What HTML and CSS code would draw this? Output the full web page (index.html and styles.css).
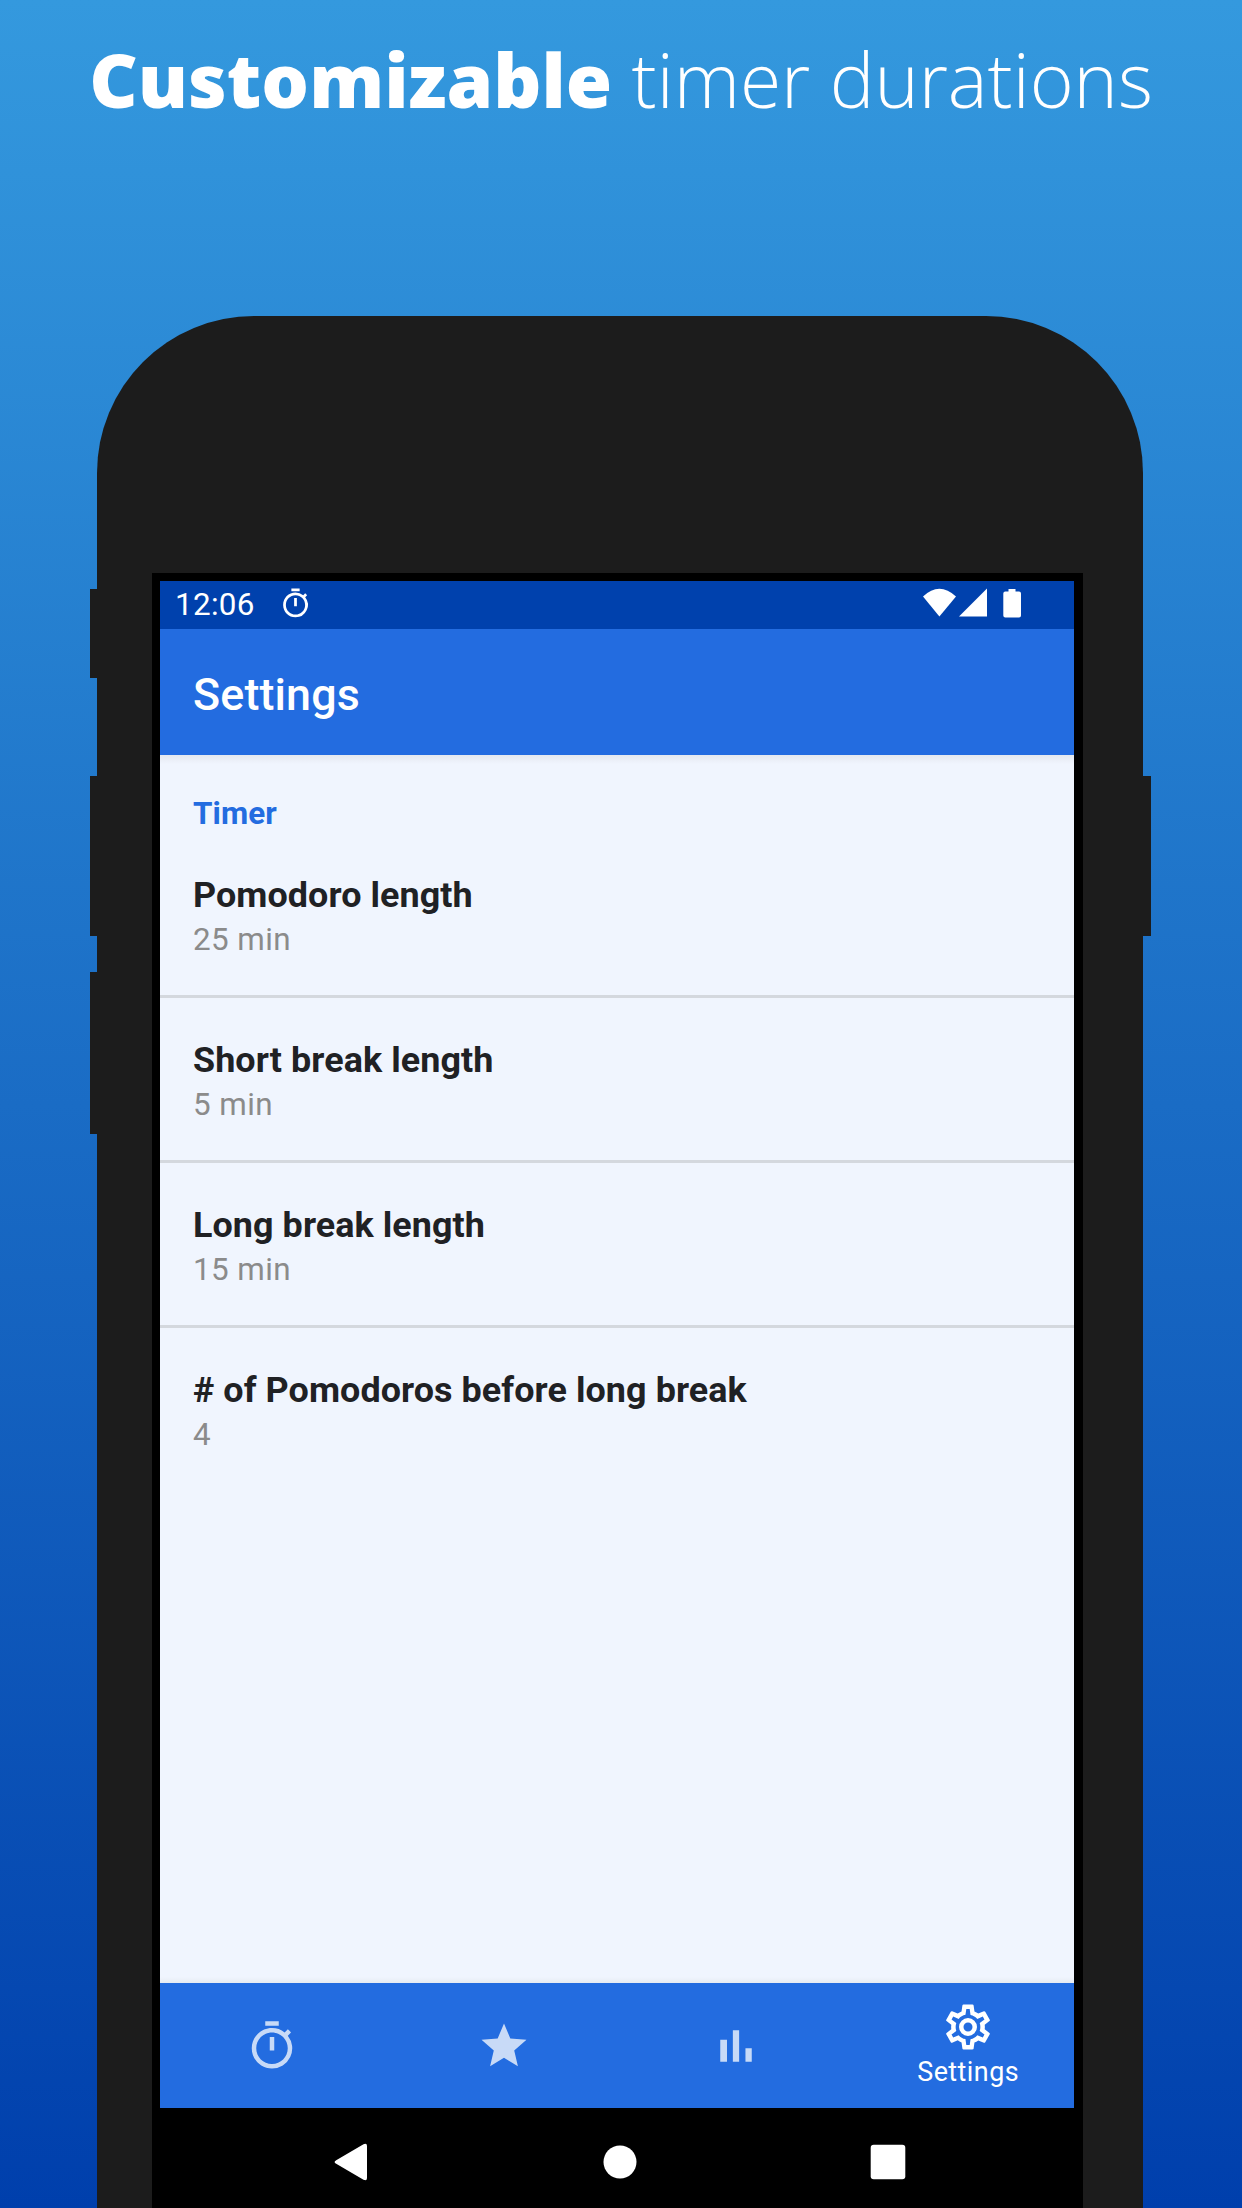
FILE: index.html
```html
<!DOCTYPE html>
<html lang="en">
<head>
<meta charset="utf-8">
<title>Customizable timer durations</title>
<link rel="stylesheet" href="styles.css">
</head>
<body>
<h1 class="headline"><strong>Customizable</strong> timer durations</h1>
<main class="phone">
  <span class="key key-mute"></span>
  <span class="key key-up"></span>
  <span class="key key-down"></span>
  <span class="key key-power"></span>
  <div class="bezel">
    <div class="status">
      <span class="clock">12:06</span>
      <svg class="status-timer" viewBox="0 0 24 24"><path d="M15 1H9v2h6V1zm-4 13h2V8h-2v6zm8.030-6.610l1.420-1.420c-.430-.510-.900-.990-1.410-1.410l-1.420 1.420A8.962 8.962 0 0 0 12 4c-4.970 0-9 4.030-9 9s4.020 9 9 9a8.994 8.994 0 0 0 7.030-14.610zM12 20c-3.870 0-7-3.130-7-7s3.130-7 7-7 7 3.130 7 7-3.130 7-7 7z"/></svg>
      <svg class="status-icons" viewBox="0 0 100 30"><path d="M1 8.500Q17.300-7 34 8.500L17.400 28.500z"/><path d="M37 28.500L65 .500v28z"/><path d="M86.500 1h7v2.500h3.500q2 0 2 2v22q0 2-2 2H83.300q-2 0-2-2v-22q0-2 2-2h3.200z"/></svg>
    </div>
    <header class="app-bar">Settings</header>
    <section class="content">
      <h2 class="section">Timer</h2>
      <div class="row"><div class="name">Pomodoro length</div><div class="value">25 min</div></div>
      <div class="row"><div class="name">Short break length</div><div class="value">5 min</div></div>
      <div class="row"><div class="name">Long break length</div><div class="value">15 min</div></div>
      <div class="row"><div class="name"># of Pomodoros before long break</div><div class="value">4</div></div>
    </section>
    <nav class="tabs">
      <a class="tab"><svg class="icon" viewBox="0 0 24 24"><path d="M15 1H9v2h6V1zm-4 13h2V8h-2v6zm8.030-6.610l1.420-1.420c-.430-.510-.900-.990-1.410-1.410l-1.420 1.420A8.962 8.962 0 0 0 12 4c-4.970 0-9 4.030-9 9s4.020 9 9 9a8.994 8.994 0 0 0 7.030-14.610zM12 20c-3.870 0-7-3.130-7-7s3.130-7 7-7 7 3.130 7 7-3.130 7-7 7z"/></svg></a>
      <a class="tab"><svg class="icon" viewBox="0 0 24 24"><path d="M12 17.270L18.180 21l-1.640-7.030L22 9.240l-7.190-.610L12 2 9.190 8.630 2 9.240l5.460 4.730L5.820 21z"/></svg></a>
      <a class="tab"><svg class="icon" viewBox="0 0 24 24"><path d="M5 9.200h3V19H5zM10.600 5h2.800v14h-2.800zm5.600 8H19v6h-2.800z"/></svg></a>
      <a class="tab active"><svg class="icon" viewBox="0 0 24 24"><path d="M12,8A4,4 0 0,1 16,12A4,4 0 0,1 12,16A4,4 0 0,1 8,12A4,4 0 0,1 12,8M12,10A2,2 0 0,0 10,12A2,2 0 0,0 12,14A2,2 0 0,0 14,12A2,2 0 0,0 12,10M10,22C9.750,22 9.540,21.820 9.500,21.580L9.130,18.930C8.500,18.680 7.960,18.340 7.440,17.940L4.950,18.950C4.730,19.030 4.460,18.950 4.340,18.730L2.340,15.270C2.210,15.050 2.270,14.780 2.460,14.630L4.570,12.970L4.500,12L4.570,11L2.460,9.370C2.270,9.220 2.210,8.950 2.340,8.730L4.340,5.270C4.460,5.050 4.730,4.960 4.950,5.050L7.440,6.050C7.960,5.660 8.500,5.320 9.130,5.070L9.500,2.420C9.540,2.180 9.750,2 10,2H14C14.250,2 14.460,2.180 14.500,2.420L14.870,5.070C15.500,5.320 16.040,5.660 16.560,6.050L19.050,5.050C19.270,4.960 19.540,5.050 19.660,5.270L21.660,8.730C21.790,8.950 21.730,9.220 21.540,9.370L19.430,11L19.500,12L19.430,13L21.540,14.630C21.730,14.780 21.790,15.050 21.660,15.270L19.660,18.730C19.540,18.950 19.270,19.040 19.050,18.950L16.560,17.950C16.040,18.340 15.500,18.680 14.870,18.930L14.500,21.580C14.460,21.820 14.250,22 14,22H10M11.250,4L10.880,6.610C9.680,6.860 8.620,7.500 7.850,8.390L5.440,7.350L4.690,8.650L6.800,10.200C6.400,11.370 6.400,12.640 6.800,13.800L4.680,15.360L5.430,16.660L7.860,15.620C8.630,16.500 9.680,17.140 10.870,17.380L11.240,20H12.760L13.130,17.390C14.320,17.140 15.370,16.500 16.140,15.620L18.570,16.660L19.320,15.360L17.200,13.810C17.600,12.640 17.600,11.370 17.200,10.200L19.310,8.650L18.560,7.350L16.150,8.390C15.380,7.500 14.320,6.860 13.120,6.620L12.750,4H11.250Z"/></svg><span class="tab-label">Settings</span></a>
    </nav>
    <div class="system">
      <svg class="sys-icon" viewBox="0 0 40 40"><path d="M5.200 18.200L32.500 2.300Q36 .800 36 4v32q0 3.200-3.500 1.700L5.200 21.800Q2 20 5.200 18.200z"/></svg>
      <svg class="sys-icon" viewBox="0 0 40 40"><circle cx="20" cy="20" r="16.500"/></svg>
      <svg class="sys-icon" viewBox="0 0 40 40"><rect x="2.700" y="2.700" width="34.600" height="34.600" rx="3"/></svg>
    </div>
  </div>
</main>
</body>
</html>
```
FILE: styles.css
```css
* { box-sizing: border-box; }

body {
  margin: 0;
  width: 1242px;
  height: 2208px;
  display: flex;
  flex-direction: column;
  overflow: hidden;
  background: linear-gradient(#3499de, #003fac);
  font-family: Roboto, sans-serif;
}

svg { display: block; fill: #fff; }

.headline {
  margin: 0;
  height: 316px;
  padding-top: 28px;
  line-height: 102px;
  text-align: center;
  white-space: nowrap;
  font-family: "Open Sans", sans-serif;
  font-size: 75px;
  font-weight: 300;
  color: #fff;
}
.headline strong { font-weight: 800; }

.phone {
  position: relative;
  flex: 1;
  margin: 0 99px 0 97px;
  padding: 257px 60px 0 55px;
  display: flex;
  flex-direction: column;
  background: #1c1c1c;
  border-radius: 157px 157px 0 0;
}

/* hardware keys stick out of the body */
.key {
  position: absolute;
  left: -7px;
  width: 8px;
  background: #1c1c1c;
}
.key-mute { top: 273px; height: 89px; }
.key-up { top: 460px; height: 160px; }
.key-down { top: 656px; height: 162px; }
.key-power { top: 460px; height: 160px; left: auto; right: -8px; width: 9px; }

.bezel {
  flex: 1;
  display: flex;
  flex-direction: column;
  padding: 8px 9px 0 8px;
  background: #000;
}

.status {
  height: 48px;
  padding: 0 52px 0 15px;
  display: flex;
  align-items: flex-start;
  background: #0041ad;
  color: #fff;
}
.clock { width: 104px; font-size: 31.4px; line-height: 47px; letter-spacing: .3px; }
.status-timer { width: 33px; height: 33px; margin-top: 6px; }
.status-icons { width: 100px; height: 30px; margin: 7px 0 0 auto; }

.app-bar {
  height: 126px;
  padding: 5px 33px 0;
  background: #236ce0;
  color: #fff;
  font-size: 44.8px;
  font-weight: 500;
  line-height: 121px;
  letter-spacing: .15px;
}

.content {
  flex: 1;
  padding-top: 38px;
  background:
    linear-gradient(#e4e8ef, #f0f5fe) 0 0 / 100% 9px no-repeat,
    linear-gradient(#f0f5fe, #e6ebf2) 0 100% / 100% 6px no-repeat,
    #f0f5fe;
}
.section {
  margin: 0;
  height: 40px;
  padding-left: 33px;
  font-size: 31.4px;
  font-weight: 700;
  line-height: 41px;
  letter-spacing: .1px;
  color: #236ce0;
}
.row {
  padding: 40px 33px 32px;
  border-bottom: 3px solid #d4d8de;
}
.row:last-child { border-bottom: 0; }
.name { font-size: 35.9px; font-weight: 700; line-height: 44px; letter-spacing: .08px; color: #202124; }
.value { font-size: 31.4px; line-height: 46px; letter-spacing: .4px; color: #8b8b8b; }

.tabs {
  height: 125px;
  padding-left: 6px;
  display: flex;
  gap: 20.300px;
  background: #236ce0;
}
.tab {
  width: 212px;
  display: flex;
  flex-direction: column;
  align-items: center;
  justify-content: center;
}
.icon { width: 54px; height: 54px; opacity: .75; }
.active { justify-content: flex-start; padding-top: 17px; }
.active .icon { opacity: 1; }
.tab-label { color: #fff; font-size: 26.900px; line-height: 32px; margin-top: 2px; letter-spacing: .45px; }

.system {
  height: 100px;
  padding: 34px 166px 0 171px;
  display: flex;
  justify-content: space-between;
}
.sys-icon { width: 40px; height: 40px; }
```
